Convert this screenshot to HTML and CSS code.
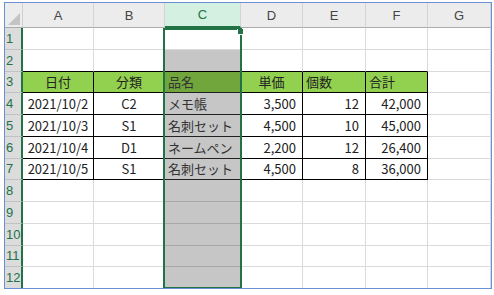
FILE: index.html
```html
<!DOCTYPE html>
<html lang="ja">
<head>
    <meta charset="UTF-8">
    <title>売上表</title>
    <link rel="stylesheet" href="styles.css">
</head>
<body>
    <div class="sheet">
        <div class="corner"><span class="tri"></span></div>
        <div class="colhdr">A</div>
        <div class="colhdr">B</div>
        <div class="colhdr sel">C</div>
        <div class="colhdr">D</div>
        <div class="colhdr">E</div>
        <div class="colhdr">F</div>
        <div class="colhdr">G</div>

        <!-- 1 -->
        <div class="rowhdr">1</div>
        <div class="cell"></div><div class="cell"></div><div class="cell"></div>
        <div class="cell"></div><div class="cell"></div><div class="cell"></div><div class="cell"></div>

        <!-- 2 -->
        <div class="rowhdr">2</div>
        <div class="cell tt"></div><div class="cell tt"></div><div class="cell tt sel"></div>
        <div class="cell tt"></div><div class="cell tt"></div><div class="cell tt"></div><div class="cell"></div>

        <!-- 3 -->
        <div class="rowhdr">3</div>
        <div class="cell tb hd c">日付</div>
        <div class="cell tb hd c">分類</div>
        <div class="cell tb hd sel">品名</div>
        <div class="cell tb hd c">単価</div>
        <div class="cell tb hd">個数</div>
        <div class="cell tb hd">合計</div>
        <div class="cell"></div>

        <!-- 4 -->
        <div class="rowhdr">4</div>
        <div class="cell tb c">2021/10/2</div>
        <div class="cell tb c">C2</div>
        <div class="cell tb sel">メモ帳</div>
        <div class="cell tb r">3,500</div>
        <div class="cell tb r">12</div>
        <div class="cell tb r">42,000</div>
        <div class="cell"></div>

        <!-- 5 -->
        <div class="rowhdr">5</div>
        <div class="cell tb c">2021/10/3</div>
        <div class="cell tb c">S1</div>
        <div class="cell tb sel">名刺セット</div>
        <div class="cell tb r">4,500</div>
        <div class="cell tb r">10</div>
        <div class="cell tb r">45,000</div>
        <div class="cell"></div>

        <!-- 6 -->
        <div class="rowhdr">6</div>
        <div class="cell tb c">2021/10/4</div>
        <div class="cell tb c">D1</div>
        <div class="cell tb sel">ネームペン</div>
        <div class="cell tb r">2,200</div>
        <div class="cell tb r">12</div>
        <div class="cell tb r">26,400</div>
        <div class="cell"></div>

        <!-- 7 -->
        <div class="rowhdr">7</div>
        <div class="cell tb c">2021/10/5</div>
        <div class="cell tb c">S1</div>
        <div class="cell tb sel">名刺セット</div>
        <div class="cell tb r">4,500</div>
        <div class="cell tb r">8</div>
        <div class="cell tb r">36,000</div>
        <div class="cell"></div>

        <!-- 8 -->
        <div class="rowhdr">8</div>
        <div class="cell"></div><div class="cell"></div><div class="cell sel"></div>
        <div class="cell"></div><div class="cell"></div><div class="cell"></div><div class="cell"></div>

        <!-- 9 -->
        <div class="rowhdr">9</div>
        <div class="cell"></div><div class="cell"></div><div class="cell sel"></div>
        <div class="cell"></div><div class="cell"></div><div class="cell"></div><div class="cell"></div>

        <!-- 10 -->
        <div class="rowhdr">10</div>
        <div class="cell"></div><div class="cell"></div><div class="cell sel"></div>
        <div class="cell"></div><div class="cell"></div><div class="cell"></div><div class="cell"></div>

        <!-- 11 -->
        <div class="rowhdr">11</div>
        <div class="cell"></div><div class="cell"></div><div class="cell sel"></div>
        <div class="cell"></div><div class="cell"></div><div class="cell"></div><div class="cell"></div>

        <!-- 12 -->
        <div class="rowhdr">12</div>
        <div class="cell"></div><div class="cell"></div><div class="cell sel"></div>
        <div class="cell"></div><div class="cell"></div><div class="cell"></div><div class="cell"></div>

        <!-- 列Cの選択枠 -->
        <div class="selection"><span class="handle"></span></div>
    </div>
</body>
</html>
```

FILE: styles.css
```css
body {
    margin: 0;
    background-color: #fff;
    font-family: "Noto Sans CJK JP", "Liberation Sans", sans-serif;
    font-size: 13px;
    color: #222;
}

.sheet {
    display: grid;
    grid-template-columns: 18px 71px 71px 76px 62px 63px 62px 1fr;
    grid-template-rows: 25px repeat(12, 21.75px);
    width: 486px;
    height: 285px;
    margin: 2px 0 0 4px;
    border: 1px solid #6b8fd3;
    overflow: hidden;
    position: relative;
}

.sheet > div {
    box-sizing: border-box;
}

.corner {
    background-color: #ececec;
    border-right: 1px solid #d0d0d0;
    border-bottom: 1px solid #ababab;
    position: relative;
}

.tri {
    position: absolute;
    right: 2px;
    bottom: 2px;
    width: 0;
    height: 0;
    border-left: 12px solid transparent;
    border-bottom: 12px solid #c4c4c4;
}

.colhdr {
    display: flex;
    align-items: center;
    justify-content: center;
    background-color: #ececec;
    border-right: 1px solid #d4d4d4;
    border-bottom: 1px solid #ababab;
    color: #444;
    font-family: "Liberation Sans", sans-serif;
    font-size: 13px;
}

.colhdr.sel {
    background-color: #d3f0e0;
    color: #217346;
    border-bottom: 2px solid #217346;
}

.rowhdr {
    display: flex;
    align-items: center;
    padding-left: 1px;
    background-color: #dcdcdc;
    border-right: 2px solid #217346;
    border-bottom: 1px solid #c2c2c2;
    color: #217346;
    font-family: "Liberation Sans", sans-serif;
    font-size: 13px;
}

.cell {
    display: flex;
    align-items: center;
    padding: 0 3px;
    white-space: nowrap;
    border-right: 1px solid #dadada;
    border-bottom: 1px solid #dadada;
}

.cell.c {
    justify-content: center;
}

.cell.r {
    justify-content: flex-end;
    padding-right: 6px;
}

.cell.sel {
    background-color: #c6c6c6;
    border-bottom-color: #a8a8a8;
    color: #333;
}

.cell.tt {
    border-bottom-color: #000;
}

.cell.tb {
    border-right-color: #000;
    border-bottom-color: #000;
}

.cell.hd {
    background-color: #92d050;
}

.cell.hd.sel {
    background-color: #70a63c;
}

.cell.tb.sel {
    border-bottom-color: #222;
}

/* 選択範囲の枠（グリッド領域の上に重ねる） */
.selection {
    position: absolute;
    grid-column: 4 / 5;
    grid-row: 2 / 14;
    top: 0;
    bottom: 0;
    left: -2px;
    right: -1px;
    border: 2px solid #217346;
    z-index: 2;
}

.handle {
    position: absolute;
    top: -1px;
    right: -4px;
    width: 5px;
    height: 5px;
    background-color: #217346;
    border: 1px solid #fff;
    border-top: none;
}
```
